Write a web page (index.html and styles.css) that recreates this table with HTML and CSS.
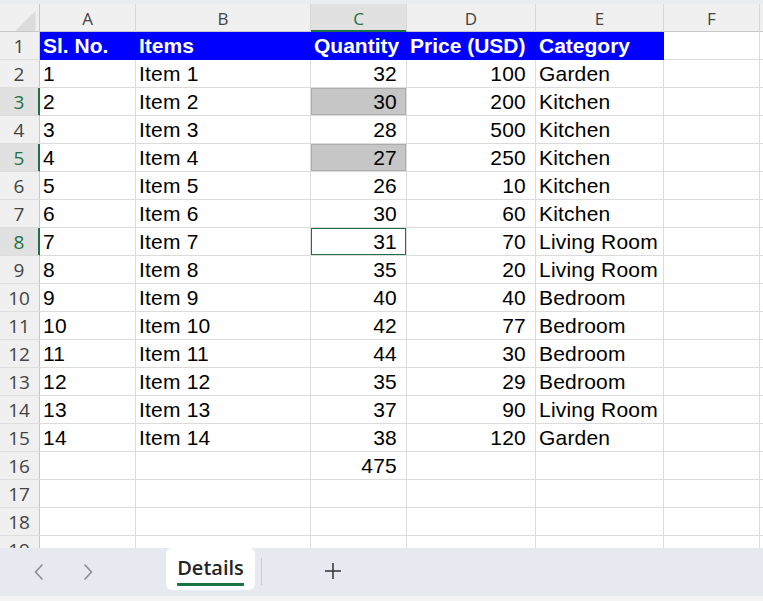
FILE: index.html
```html
<!DOCTYPE html>
<html>
<head>
<meta charset="utf-8">
<link rel="stylesheet" href="styles.css">
</head>
<body>
<div class="app">
  <div class="topstrip"></div>
  <div class="sheet">
    <div class="row hdr">
      <div class="cell rh corner"><svg width="39" height="27" viewBox="0 0 39 27"><polygon points="15,27 35.5,7 35.5,27" fill="#dcdcdc"/></svg></div>
      <div class="cell ch ca">A</div>
      <div class="cell ch cb">B</div>
      <div class="cell ch cc chsel">C</div>
      <div class="cell ch cd">D</div>
      <div class="cell ch ce">E</div>
      <div class="cell ch cf">F</div>
      <div class="cell ch cg"></div>
    </div>
    <div class="row">
      <div class="cell rh">1</div>
      <div class="cell ca th">Sl. No.</div>
      <div class="cell cb th">Items</div>
      <div class="cell cc th">Quantity</div>
      <div class="cell cd th">Price (USD)</div>
      <div class="cell ce th">Category</div>
      <div class="cell cf"></div>
      <div class="cell cg"></div>
    </div>
    <div class="row">
      <div class="cell rh">2</div>
      <div class="cell ca">1</div><div class="cell cb">Item 1</div><div class="cell cc num">32</div><div class="cell cd num">100</div><div class="cell ce">Garden</div><div class="cell cf"></div><div class="cell cg"></div>
    </div>
    <div class="row">
      <div class="cell rh rhsel">3</div>
      <div class="cell ca">2</div><div class="cell cb">Item 2</div><div class="cell cc num sel">30</div><div class="cell cd num">200</div><div class="cell ce">Kitchen</div><div class="cell cf"></div><div class="cell cg"></div>
    </div>
    <div class="row">
      <div class="cell rh">4</div>
      <div class="cell ca">3</div><div class="cell cb">Item 3</div><div class="cell cc num">28</div><div class="cell cd num">500</div><div class="cell ce">Kitchen</div><div class="cell cf"></div><div class="cell cg"></div>
    </div>
    <div class="row">
      <div class="cell rh rhsel">5</div>
      <div class="cell ca">4</div><div class="cell cb">Item 4</div><div class="cell cc num sel">27</div><div class="cell cd num">250</div><div class="cell ce">Kitchen</div><div class="cell cf"></div><div class="cell cg"></div>
    </div>
    <div class="row">
      <div class="cell rh">6</div>
      <div class="cell ca">5</div><div class="cell cb">Item 5</div><div class="cell cc num">26</div><div class="cell cd num">10</div><div class="cell ce">Kitchen</div><div class="cell cf"></div><div class="cell cg"></div>
    </div>
    <div class="row">
      <div class="cell rh">7</div>
      <div class="cell ca">6</div><div class="cell cb">Item 6</div><div class="cell cc num">30</div><div class="cell cd num">60</div><div class="cell ce">Kitchen</div><div class="cell cf"></div><div class="cell cg"></div>
    </div>
    <div class="row">
      <div class="cell rh rhsel">8</div>
      <div class="cell ca">7</div><div class="cell cb">Item 7</div><div class="cell cc num active">31</div><div class="cell cd num">70</div><div class="cell ce">Living Room</div><div class="cell cf"></div><div class="cell cg"></div>
    </div>
    <div class="row">
      <div class="cell rh">9</div>
      <div class="cell ca">8</div><div class="cell cb">Item 8</div><div class="cell cc num">35</div><div class="cell cd num">20</div><div class="cell ce">Living Room</div><div class="cell cf"></div><div class="cell cg"></div>
    </div>
    <div class="row">
      <div class="cell rh">10</div>
      <div class="cell ca">9</div><div class="cell cb">Item 9</div><div class="cell cc num">40</div><div class="cell cd num">40</div><div class="cell ce">Bedroom</div><div class="cell cf"></div><div class="cell cg"></div>
    </div>
    <div class="row">
      <div class="cell rh">11</div>
      <div class="cell ca">10</div><div class="cell cb">Item 10</div><div class="cell cc num">42</div><div class="cell cd num">77</div><div class="cell ce">Bedroom</div><div class="cell cf"></div><div class="cell cg"></div>
    </div>
    <div class="row">
      <div class="cell rh">12</div>
      <div class="cell ca">11</div><div class="cell cb">Item 11</div><div class="cell cc num">44</div><div class="cell cd num">30</div><div class="cell ce">Bedroom</div><div class="cell cf"></div><div class="cell cg"></div>
    </div>
    <div class="row">
      <div class="cell rh">13</div>
      <div class="cell ca">12</div><div class="cell cb">Item 12</div><div class="cell cc num">35</div><div class="cell cd num">29</div><div class="cell ce">Bedroom</div><div class="cell cf"></div><div class="cell cg"></div>
    </div>
    <div class="row">
      <div class="cell rh">14</div>
      <div class="cell ca">13</div><div class="cell cb">Item 13</div><div class="cell cc num">37</div><div class="cell cd num">90</div><div class="cell ce">Living Room</div><div class="cell cf"></div><div class="cell cg"></div>
    </div>
    <div class="row">
      <div class="cell rh">15</div>
      <div class="cell ca">14</div><div class="cell cb">Item 14</div><div class="cell cc num">38</div><div class="cell cd num">120</div><div class="cell ce">Garden</div><div class="cell cf"></div><div class="cell cg"></div>
    </div>
    <div class="row">
      <div class="cell rh">16</div>
      <div class="cell ca"></div><div class="cell cb"></div><div class="cell cc num">475</div><div class="cell cd"></div><div class="cell ce"></div><div class="cell cf"></div><div class="cell cg"></div>
    </div>
    <div class="row">
      <div class="cell rh">17</div>
      <div class="cell ca"></div><div class="cell cb"></div><div class="cell cc"></div><div class="cell cd"></div><div class="cell ce"></div><div class="cell cf"></div><div class="cell cg"></div>
    </div>
    <div class="row">
      <div class="cell rh">18</div>
      <div class="cell ca"></div><div class="cell cb"></div><div class="cell cc"></div><div class="cell cd"></div><div class="cell ce"></div><div class="cell cf"></div><div class="cell cg"></div>
    </div>
    <div class="row">
      <div class="cell rh">19</div>
      <div class="cell ca"></div><div class="cell cb"></div><div class="cell cc"></div><div class="cell cd"></div><div class="cell ce"></div><div class="cell cf"></div><div class="cell cg"></div>
    </div>
  </div>
  <div class="tabbar">
    <div class="nav">
      <svg class="chev" width="10" height="16" viewBox="0 0 10 16"><polyline points="8,1 1.5,8 8,15" fill="none" stroke="#8c8c8c" stroke-width="1.6" stroke-linecap="round" stroke-linejoin="round"/></svg>
      <svg class="chev" width="10" height="16" viewBox="0 0 10 16"><polyline points="2,1 8.5,8 2,15" fill="none" stroke="#8c8c8c" stroke-width="1.6" stroke-linecap="round" stroke-linejoin="round"/></svg>
    </div>
    <div class="tab"><span class="tablabel">Details</span></div>
    <div class="sep"></div>
    <div class="add"><svg width="18" height="18" viewBox="0 0 18 18"><path d="M9 1v16M1 9h16" stroke="#333" stroke-width="1.5" fill="none"/></svg></div>
  </div>
  <div class="bottomstrip"></div>
</div>
</body>
</html>
```
FILE: styles.css
```css
html, body {
  margin: 0;
  padding: 0;
  background: #ffffff;
}
body {
  width: 763px;
  height: 601px;
  overflow: hidden;
}
.app {
  display: flex;
  flex-direction: column;
  width: 763px;
  height: 601px;
}
.topstrip {
  height: 4px;
  background: #e9ecf0;
  flex: none;
}
.sheet {
  height: 544px;
  overflow: hidden;
  flex: none;
  background: #fff;
}
.row {
  display: flex;
  height: 28px;
}
.cell {
  box-sizing: border-box;
  height: 28px;
  border-right: 1px solid #dcdcdc;
  border-bottom: 1px solid #dcdcdc;
  font-family: "Liberation Sans", Arial, sans-serif;
  font-size: 21px;
  letter-spacing: 0.2px;
  line-height: 27px;
  color: #000;
  padding: 0 2px 0 3px;
  white-space: nowrap;
  overflow: visible;
  flex: none;
}
.ca { width: 96px; }
.cb { width: 175px; }
.cc { width: 96px; }
.cd { width: 129px; }
.ce { width: 128px; }
.cf { width: 96px; }
.cg { width: 96px; }

.num {
  text-align: right;
  padding-right: 9px;
}
.th {
  background: #0000ff;
  color: #fff;
  font-weight: bold;
  letter-spacing: 0;
  border-color: #0000ff;
}
.sel {
  background: #c6c6c6;
  box-shadow: inset 0 0 0 1px #acacac;
}
.active {
  box-shadow: inset 0 0 0 1px #1e7145;
}

.rh {
  width: 40px;
  background: #f0f0f0;
  border-right: 1px solid #c8c8c8;
  border-bottom: 1px solid #dedede;
  font-family: "Open Sans", "Noto Sans", sans-serif;
  font-size: 19px;
  letter-spacing: 0;
  line-height: 27px;
  color: #444;
  text-align: center;
  padding: 1px 1px 0 0;
}
.rhsel {
  background: #e1e1e1;
  color: #1e7145;
  border-right-color: #1e7145;
  box-shadow: inset -1px 0 0 #1e7145;
}
.hdr .cell {
  background: #f0f0f0;
  border-bottom: 1px solid #c8c8c8;
}
.ch {
  border-right-color: #d8d8d8;
  font-family: "Open Sans", "Noto Sans", sans-serif;
  font-size: 17px;
  letter-spacing: 0;
  color: #444;
  text-align: center;
  padding: 1px 0 0 0;
}
.hdr .chsel {
  background: #e1e1e1;
  color: #1e7145;
  border-bottom-color: #1e7145;
  box-shadow: inset 0 -1px 0 #1e7145;
}
.corner {
  padding: 0;
  border-right-color: #c8c8c8;
}
.corner svg {
  display: block;
}

.tabbar {
  height: 48px;
  background: #e6e9ef;
  display: flex;
  align-items: flex-start;
  flex: none;
}
.nav {
  width: 166px;
  height: 48px;
  display: flex;
  align-items: center;
  padding-left: 34px;
  box-sizing: border-box;
  gap: 39px;
}
.chev {
  display: block;
  margin-top: -1px;
}
.tab {
  width: 89px;
  height: 42px;
  background: #fff;
  border-radius: 6px;
  display: flex;
  justify-content: center;
  align-items: flex-start;
  box-sizing: border-box;
  padding-top: 5px;
}
.tablabel {
  display: block;
  font-family: "Open Sans", "Noto Sans", sans-serif;
  font-weight: 600;
  font-size: 20px;
  color: #242424;
  line-height: 30px;
  height: 30px;
  border-bottom: 3px solid #1a7343;
  border-radius: 1px;
}
.sep {
  width: 1px;
  height: 27px;
  background: #c8cbd0;
  margin: 10px 0 0 6px;
}
.add {
  margin: 14px 0 0 62px;
}
.add svg {
  display: block;
}
.bottomstrip {
  height: 5px;
  background: #f4f4f4;
  flex: none;
}
```
